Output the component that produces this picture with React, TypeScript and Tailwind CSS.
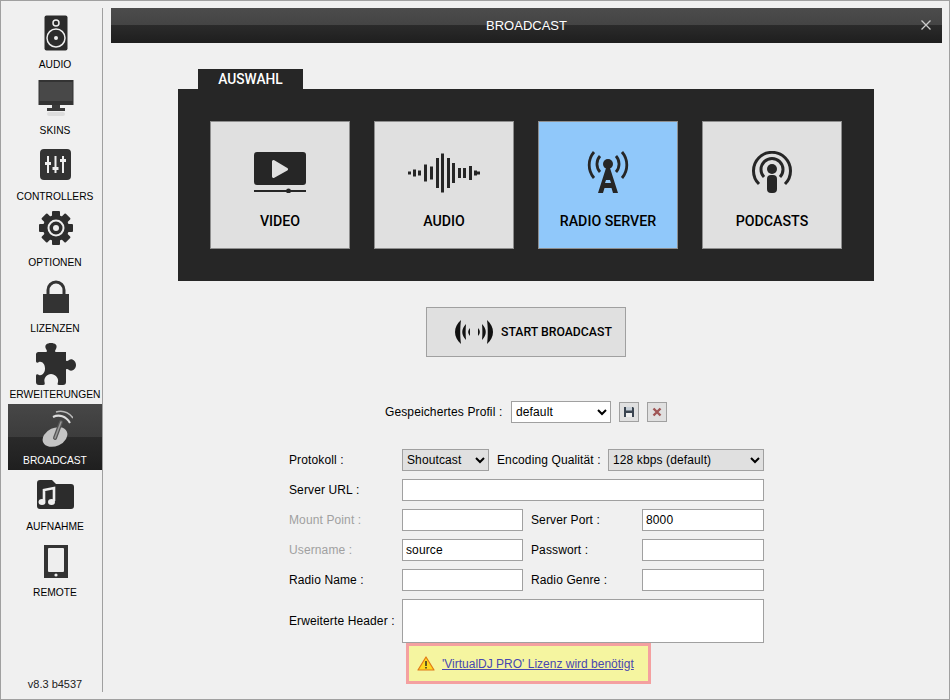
import React from "react";

const font = "font-['Liberation_Sans',Arial,sans-serif]";

const SpeakerIcon = () => (
  <svg width="24" height="36" viewBox="0 0 24 36">
    <rect x="0.5" y="0.5" width="23" height="35" rx="2" fill="#2b2b2b" />
    <circle cx="12" cy="8" r="3" fill="none" stroke="#eee" strokeWidth="1.5" />
    <circle cx="12" cy="23" r="9" fill="none" stroke="#eee" strokeWidth="1.5" />
    <circle cx="12" cy="23" r="2" fill="#eee" />
  </svg>
);

const MonitorIcon = () => (
  <svg width="36" height="38" viewBox="0 0 36 38">
    <rect x="0.5" y="0" width="35" height="25" fill="#333" />
    <rect x="1.5" y="2" width="33" height="19" fill="#484848" />
    <path d="M14 25h8v3h5v3H9v-3h5z" fill="#3a3a3a" />
    <rect x="9" y="32" width="18" height="4" rx="2" fill="#ddd" />
  </svg>
);

const SlidersIcon = () => (
  <svg width="31" height="31" viewBox="0 0 31 31">
    <rect width="31" height="31" rx="4" fill="#333" />
    <g stroke="#eee" strokeWidth="2">
      <path d="M8 7v17M15.500 7v17M23 7v17" />
    </g>
    <g fill="#eee">
      <rect x="5" y="13" width="6" height="3" />
      <rect x="12.500" y="18" width="6" height="3" />
      <rect x="20" y="10" width="6" height="3" />
    </g>
  </svg>
);

const GearIcon = () => (
  <svg width="34" height="34" viewBox="0 0 34 34">
    <g fill="#2e2e2e">
      {[0, 45, 90, 135, 180, 225, 270, 315].map((a) => (
        <rect key={a} x="13" y="0" width="8" height="8" rx="1" transform={`rotate(${a} 17 17)`} />
      ))}
      <circle cx="17" cy="17" r="13" />
    </g>
    <circle cx="17" cy="17" r="7.500" fill="none" stroke="#eee" strokeWidth="2" />
    <circle cx="17" cy="17" r="3" fill="#eee" />
  </svg>
);

const LockIcon = () => (
  <svg width="26" height="33" viewBox="0 0 26 33">
    <path d="M5 15V10a8 8 0 0 1 16 0v5" fill="none" stroke="#333" strokeWidth="3" />
    <rect y="14" width="26" height="19" fill="#333" />
  </svg>
);

const PuzzleIcon = () => (
  <svg width="40" height="42" viewBox="0 0 40 42">
    <path
      d="M2.500 9H10C11.500 9 11 7 10 6C8 2 11 0 15 0C19 0 22 2 20 6C19 7 18.500 9 20 9H30V17C30 18.500 32 18 33 17C36 15 40 18 40 22C40 26 36 29 33 27C32 26 30 25.500 30 27V39a3 3 0 0 1-3 3H23C21 42 21.500 41 22 39C23 35 19 31 15 31C11 31 7.500 35 8.500 39C9 41 9 42 7 42H3a3 3 0 0 1-3-3V33C0 31 1.500 31 3 32C6 33 9 30 9 25.500C9 21 6 18 3 19C1.500 20 0 20 0 18V11.500A2.500 2.500 0 0 1 2.500 9Z"
      fill="#2e2e2e"
    />
  </svg>
);

const DishIcon = () => (
  <svg width="34" height="40" viewBox="0 0 34 40">
    <ellipse cx="16" cy="29" rx="13" ry="9" transform="rotate(-25 16 29)" fill="#c4c4c4" />
    <path d="M16 30l6-16" stroke="#555" strokeWidth="4" strokeLinecap="round" />
    <path d="M16 30l6-16" stroke="#999" strokeWidth="1.500" strokeLinecap="round" />
    <path d="M14 9c6-3 13-1 17 6" fill="none" stroke="#ddd" strokeWidth="2" />
    <path d="M17 4c7-2 13 1 17 6" fill="none" stroke="#bbb" strokeWidth="1.500" />
  </svg>
);

const FolderIcon = () => (
  <svg width="37" height="29" viewBox="0 0 37 29">
    <path
      d="M0 3a3 3 0 0 1 3-3h12l4 4h15a3 3 0 0 1 3 3v19a3 3 0 0 1-3 3H3a3 3 0 0 1-3-3z"
      fill="#2c2c2c"
    />
    <path d="M7 21V10l10-2v13" fill="none" stroke="#eee" strokeWidth="2.600" />
    <ellipse cx="5" cy="22" rx="3.500" ry="3" fill="#eee" />
    <ellipse cx="14.500" cy="22" rx="3.500" ry="3" fill="#eee" />
  </svg>
);

const PhoneIcon = () => (
  <svg width="24" height="33" viewBox="0 0 24 33">
    <rect width="24" height="33" fill="#333" />
    <rect x="4" y="3" width="16" height="24" rx="1" fill="#eee" />
    <circle cx="12" cy="30" r="1.600" fill="#eee" />
  </svg>
);

const VideoIcon = () => (
  <svg width="52" height="41" viewBox="0 0 52 41">
    <rect width="52" height="33" rx="3" fill="#262626" />
    <path d="M18 9.500a1.500 1.500 0 0 1 2.300-1.300l13 7.700a1.500 1.500 0 0 1 0 2.600l-13 7.200a1.500 1.500 0 0 1-2.300-1.300z" fill="#e0e0e0" />
    <rect y="38" width="52" height="2" fill="#262626" />
    <circle cx="34.500" cy="39" r="2.400" fill="#262626" />
  </svg>
);

const waveBars = [
  [1, 3], [6, 7], [11, 5], [17, 17], [23, 13], [29, 30], [34, 39], [40, 30], [45, 20], [51, 10], [56, 10], [62, 14], [67, 5], [70, 3],
];

const WaveIcon = () => (
  <svg className="mt-[2px]" width="74" height="40" viewBox="0 0 74 40">
    {waveBars.map(([x, h]) => (
      <rect key={x} x={x} y={20 - h / 2} width="3" height={h} fill="#262626" />
    ))}
  </svg>
);

const TowerIcon = () => (
  <svg width="44" height="42" viewBox="0 0 44 42">
    <circle cx="22" cy="13" r="5" fill="#262626" />
    <path d="M20 17h4l8 25h-5l-1.500-5h-7L17 42h-5zM20 29l-1 3h6l-1-3z" fill="#262626" fillRule="evenodd" />
    <g fill="none" stroke="#262626" strokeWidth="2.800">
      <path d="M14 5a12 12 0 0 0 0 16" />
      <path d="M30 5a12 12 0 0 1 0 16" />
      <path d="M8 1a20 20 0 0 0 0 26" />
      <path d="M36 1a20 20 0 0 1 0 26" />
    </g>
  </svg>
);

const PodcastIcon = () => (
  <svg width="42" height="42" viewBox="0 0 42 42">
    <g fill="none" stroke="#262626" strokeWidth="3">
      <path d="M8 33a18.500 18.500 0 1 1 26 0" />
      <path d="M13 26a11 11 0 1 1 16 0" />
    </g>
    <circle cx="21" cy="18" r="5" fill="#262626" />
    <rect x="16" y="24" width="10" height="18" rx="4" fill="#262626" />
  </svg>
);

// crescents, mirrored for the right side
const airArcs = (
  <>
    <path d="M6 0C-2 7 -2 17 6 24C5 17 5 7 6 0Z" />
    <path d="M11 4C6 9 6 15 11 20C10.500 15 10.500 9 11 4Z" />
    <path d="M15 8C12.500 10.500 12.500 13.500 15 16C15 13.500 15 10.500 15 8Z" />
  </>
);

const AirIcon = () => (
  <svg width="38" height="24" viewBox="0 0 38 24" fill="#111">
    {airArcs}
    <g transform="matrix(-1 0 0 1 38 0)">{airArcs}</g>
  </svg>
);

const navItems = [
  { label: "AUDIO", icon: <SpeakerIcon />, shift: "mt-[2px]" },
  { label: "SKINS", icon: <MonitorIcon />, shift: "mt-[2px]" },
  { label: "CONTROLLERS", icon: <SlidersIcon />, shift: "" },
  { label: "OPTIONEN", icon: <GearIcon />, shift: "-mt-[4px]" },
  { label: "LIZENZEN", icon: <LockIcon />, shift: "" },
  { label: "ERWEITERUNGEN", icon: <PuzzleIcon />, shift: "mt-[4px]" },
  { label: "BROADCAST", icon: <DishIcon />, shift: "", active: true },
  { label: "AUFNAHME", icon: <FolderIcon />, shift: "mt-[1px]" },
  { label: "REMOTE", icon: <PhoneIcon />, shift: "mt-[3px]" },
];

const tiles = [
  { label: "VIDEO", icon: <VideoIcon /> },
  { label: "AUDIO", icon: <WaveIcon /> },
  { label: "RADIO SERVER", icon: <TowerIcon />, active: true },
  { label: "PODCASTS", icon: <PodcastIcon /> },
];

const Field = ({ value, className }: { value?: string; className: string }) => (
  <input
    defaultValue={value}
    className={`h-[22px] border border-[#a0a0a0] bg-white px-[3px] text-[12px] text-black outline-none ${className}`}
  />
);

const Row = ({ label, dim, children }: { label: string; dim?: boolean; children: React.ReactNode }) => (
  <div className="flex items-center">
    <span className={`w-[113px] shrink-0 ${dim ? "text-[#a0a0a0]" : "text-black"}`}>{label}</span>
    {children}
  </div>
);

export default function App() {
  return (
    <div className={`flex h-[700px] w-[950px] border border-[#a0a0a0] bg-[#f0f0f0] text-[12px] tracking-[0.12px] ${font}`}>
      <aside className="my-[7px] ml-[7px] flex w-[95px] shrink-0 flex-col border-r border-[#a0a0a0] tracking-normal">
        {navItems.map((item) => (
          <div
            key={item.label}
            className={`relative flex h-[66px] flex-col items-center ${
              item.active ? "bg-[linear-gradient(#474747_0%,#3c3c3c_50%,#2a2a2a_50%,#1f1f1f_100%)]" : ""
            }`}
          >
            <div className="flex h-[46px] w-full items-center justify-center pl-[1px] pt-[2px]">
              <div className={`flex ${item.shift}`}>{item.icon}</div>
            </div>
            <span className={`mt-[4px] whitespace-nowrap text-[10.25px] leading-[14px] ${item.active ? "text-white" : "text-black"}`}>
              {item.label}
            </span>
          </div>
        ))}
        <span className="mt-auto pb-[1px] text-center text-[11px] leading-[14px] text-[#222]">v8.3 b4537</span>
      </aside>

      <main className="flex flex-1 flex-col pl-[8px] pr-[7px] pt-[7px]">
        <header className="relative flex h-[35px] w-full items-center justify-center bg-[linear-gradient(#4c4c4c_0%,#444_48%,#2b2b2b_48%,#1e1e1e_100%)] text-[13px] tracking-normal text-white">
          <span>BROADCAST</span>
          <svg className="absolute right-[10px] top-[11px]" width="12" height="12" viewBox="0 0 12 12">
            <path d="M1.500 1.500l9 9M10.500 1.500l-9 9" stroke="#ccc" strokeWidth="1.300" />
          </svg>
        </header>

        <div className="flex w-[830px] flex-col items-center">
          <section className="mt-[26px] w-[696px] tracking-normal">
            <div className="ml-[20px] flex h-[20px] w-[105px] items-center justify-center bg-[#262626] font-['Roboto',sans-serif] text-[13.75px] font-medium text-white">
              AUSWAHL
            </div>
            <div className="flex h-[192px] gap-[24px] bg-[#262626] p-[32px]">
              {tiles.map((tile) => (
                <div
                  key={tile.label}
                  className={`flex h-[128px] w-[140px] flex-col items-center border border-[#8e8e8e] ${
                    tile.active ? "bg-[#90c8fa]" : "bg-[#e0e0e0]"
                  }`}
                >
                  <div className="mt-[25px] flex h-[50px] items-center justify-center">{tile.icon}</div>
                  <span className="mt-[16px] font-['Roboto',sans-serif] text-[14.2px] font-medium leading-[16px] text-black">
                    {tile.label}
                  </span>
                </div>
              ))}
            </div>
          </section>

          <button className="mt-[26px] flex h-[50px] w-[200px] items-center border border-[#a0a0a0] bg-[#e0e0e0] pl-[28px] tracking-normal">
            <AirIcon />
            <span className="ml-[8px] font-['Roboto',sans-serif] text-[12.25px] font-medium text-black">START BROADCAST</span>
          </button>

          <div className="mt-[44px] flex h-[22px] w-[282px] items-center">
            <span className="w-[126px] shrink-0 whitespace-nowrap text-black">Gespeichertes Profil :</span>
            <select className="h-[22px] w-[100px] border border-[#a0a0a0] bg-white text-[12px] text-black outline-none">
              <option>default</option>
            </select>
            <button className="ml-[8px] flex h-[20px] w-[20px] items-center justify-center border border-[#a0a0a0] bg-[#e0e0e0]">
              <svg width="12" height="12" viewBox="0 0 12 12">
                <path d="M1 1h9l1 1v9H1z" fill="#3a4450" />
                <rect x="3" y="1" width="6" height="3.500" fill="#c8d0d8" />
                <rect x="3" y="7" width="6" height="4" fill="#eee" />
              </svg>
            </button>
            <button className="ml-[8px] flex h-[20px] w-[20px] items-center justify-center border border-[#a0a0a0] bg-[#e0e0e0]">
              <svg width="10" height="10" viewBox="0 0 10 10">
                <path d="M1.500 1.500l7 7M8.500 1.500l-7 7" stroke="#a05555" strokeWidth="2.400" />
              </svg>
            </button>
          </div>

          <form className="ml-[1px] mt-[26px] flex w-[475px] flex-col gap-[8px]">
            <Row label="Protokoll :">
              <select className="h-[22px] w-[87px] border border-[#a0a0a0] bg-[#e0e0e0] text-[12px] text-black outline-none">
                <option>Shoutcast</option>
              </select>
              <span className="ml-[8px] w-[111px] shrink-0 whitespace-nowrap text-black">Encoding Qualität :</span>
              <select className="h-[22px] w-[156px] border border-[#a0a0a0] bg-[#e0e0e0] text-[12px] text-black outline-none">
                <option>128 kbps (default)</option>
              </select>
            </Row>
            <Row label="Server URL :">
              <Field className="w-[362px]" />
            </Row>
            <Row label="Mount Point :" dim>
              <Field className="w-[121px]" />
              <span className="ml-[8px] w-[111px] shrink-0 text-black">Server Port :</span>
              <Field value="8000" className="w-[122px]" />
            </Row>
            <Row label="Username :" dim>
              <Field value="source" className="w-[121px]" />
              <span className="ml-[8px] w-[111px] shrink-0 text-black">Passwort :</span>
              <Field className="w-[122px]" />
            </Row>
            <Row label="Radio Name :">
              <Field className="w-[121px]" />
              <span className="ml-[8px] w-[111px] shrink-0 text-black">Radio Genre :</span>
              <Field className="w-[122px]" />
            </Row>
            <Row label="Erweiterte Header :">
              <textarea className="h-[44px] w-[362px] resize-none border border-[#a0a0a0] bg-white outline-none" />
            </Row>
            <div className="-mt-[8px] ml-[117px] flex h-[41px] w-[245px] items-center border-[3px] border-[#f4a0a0] bg-[#f5f5a0] pl-[8px] tracking-normal">
              <svg width="18" height="15" viewBox="0 0 18 15">
                <path d="M9 1l8 13H1z" fill="#ffd820" stroke="#e07818" strokeWidth="1.200" strokeLinejoin="round" />
                <path d="M9 5v5M9 11v1.500" stroke="#222" strokeWidth="1.400" />
              </svg>
              <a className="ml-[7px] text-[12px] text-[#4848b0] underline">'VirtualDJ PRO' Lizenz wird benötigt</a>
            </div>
          </form>
        </div>
      </main>
    </div>
  );
}
